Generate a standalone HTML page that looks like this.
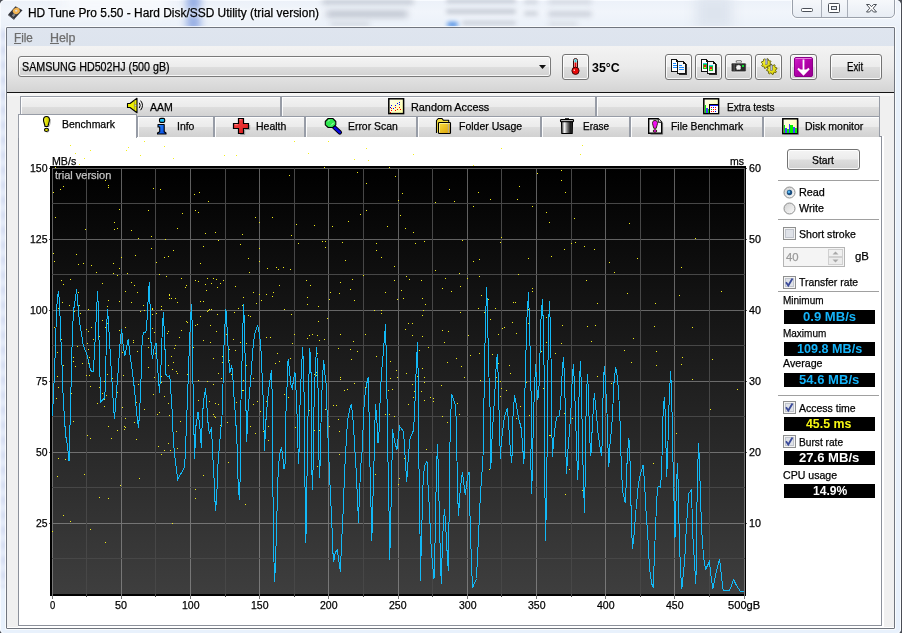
<!DOCTYPE html>
<html><head><meta charset="utf-8"><title>HD Tune Pro 5.50 - Hard Disk/SSD Utility (trial version)</title>
<style>
html,body{margin:0;padding:0}
html{background:#fff}
body{width:902px;height:633px;overflow:hidden;position:relative;background:#4a4d55;font-family:"Liberation Sans",sans-serif;font-size:11px;color:#000}
.abs{position:absolute}
.t{position:absolute;white-space:nowrap;line-height:13px;font-size:11px;transform-origin:0 0;-webkit-text-stroke:0.25px currentColor}
.glass{left:0;top:0;width:901px;height:634px;border-radius:5px;background:linear-gradient(180deg,#ecf1f9 0,#f1f5fb 12px,#ebf1f9 27px,#e8f1fb 60px,#e8f1fc 633px);box-shadow:inset 0 0 0 1px #f8fbff}
.ledge{left:1px;top:28px;width:5px;height:560px;background:repeating-linear-gradient(180deg,#e6ecf8 0,#cfd5ee 7px,#e6ecf8 15px);filter:blur(1.500px);opacity:.8}
.streak{border-radius:3px}
.capbtns{left:792px;top:-1px;height:17px;width:101px;border:1px solid #9aa0aa;border-radius:0 0 5px 5px;background:linear-gradient(180deg,#f6f8fb,#e8edf4);display:flex;overflow:hidden;box-shadow:0 0 0 1px rgba(255,255,255,.7)}
.capbtns div{height:17px;border-right:1px solid #a8aeb8}
.client{left:6px;top:27px;width:887px;height:600px;border:1px solid #70757e;background:#f0f0f0;box-shadow:0 0 0 1px rgba(255,255,255,.75);border-radius:1px}
.menubar{left:7px;top:28px;width:887px;height:18px;background:linear-gradient(180deg,#dfe5ef,#dde4ee)}
.toolbar{left:7px;top:46px;width:887px;height:46px;background:linear-gradient(180deg,#f3f3f3 0,#ebebeb 45%,#d4d4d4 100%)}
.combo{left:18px;top:56px;width:531px;height:19px;border:1px solid #7a7a7a;border-radius:3px;background:linear-gradient(180deg,#f4f4f4 0,#ececec 50%,#dedede 51%,#d2d2d2 100%);box-shadow:inset 0 0 0 1px rgba(255,255,255,.8)}
.btn{border:1px solid #737373;border-radius:3px;background:linear-gradient(180deg,#f4f4f4 0,#ececec 48%,#dddddd 52%,#d0d0d0 100%);box-shadow:inset 0 0 0 1px rgba(255,255,255,.85)}
.tab{border:1px solid #979ca6;border-bottom:0;background:linear-gradient(180deg,#f3f3f3 0,#ebebeb 48%,#dddddd 52%,#d1d1d1 100%);box-shadow:inset 1px 1px 0 rgba(255,255,255,.9)}
.tab.sel{background:#fff;box-shadow:none}
.pane{left:18px;top:136px;width:862px;height:488px;border:1px solid #8c919b;background:#fff}
.spin{left:783px;top:247px;width:60px;height:18px;border:1px solid #b4b4b4;background:#f4f4f4}
.vbox{left:784px;width:91px;height:14px;background:#000}
</style></head>
<body>
<div class="abs glass"></div><div class="abs ledge"></div>
<div class="abs streak" style="left:187px;top:-8px;width:13px;height:40px;background:#8fa8e2;filter:blur(4px)"></div>
<div class="abs streak" style="left:322px;top:0px;width:92px;height:4px;background:#bcc2cd;filter:blur(2.500px)"></div>
<div class="abs streak" style="left:326px;top:11px;width:82px;height:6px;background:#b6bcc8;filter:blur(3px)"></div>
<div class="abs streak" style="left:330px;top:22px;width:40px;height:4px;background:#d0d5de;filter:blur(2.500px)"></div>
<div class="abs streak" style="left:446px;top:-1px;width:70px;height:4px;background:#c2c8d3;filter:blur(2px)"></div>
<div class="abs streak" style="left:446px;top:9px;width:70px;height:5px;background:#c6ccd6;filter:blur(2px)"></div>
<div class="abs streak" style="left:462px;top:21px;width:54px;height:4px;background:#c9ced8;filter:blur(2px)"></div>
<div class="abs streak" style="left:447px;top:22px;width:11px;height:5px;background:#4f8fe6;filter:blur(2px)"></div>
<div class="abs streak" style="left:524px;top:0px;width:14px;height:4px;background:#cfd4dd;filter:blur(2px)"></div>
<div class="abs streak" style="left:524px;top:11px;width:14px;height:5px;background:#cfd4dd;filter:blur(2px)"></div>
<div class="abs streak" style="left:548px;top:0px;width:44px;height:4px;background:#cdd2dc;filter:blur(2.500px)"></div>
<div class="abs streak" style="left:548px;top:11px;width:44px;height:6px;background:#cdd2dc;filter:blur(2.500px)"></div>
<div class="abs streak" style="left:548px;top:22px;width:30px;height:4px;background:#d4d9e1;filter:blur(2.500px)"></div>
<div class="abs streak" style="left:696px;top:-4px;width:36px;height:34px;background:#dde4ee;filter:blur(6px)"></div>
<div class="abs streak" style="left:60px;top:-10px;width:110px;height:22px;background:#f8fafd;filter:blur(8px)"></div>
<svg class="abs" style="left:7px;top:5px" width="17" height="16" viewBox="0 0 17 16"><polygon points="1.200,9.500 8.500,1.200 15.500,5.200 7.200,14.200" fill="#33353c"/><polygon points="1.200,9.500 7.200,14.200 7.200,15 1.200,10.300" fill="#1c1c20"/><ellipse cx="9.300" cy="5.900" rx="3.600" ry="3.100" fill="#f3b450" transform="rotate(-28 9.300 5.900)"/><ellipse cx="9.200" cy="5.800" rx="1.200" ry="1" fill="#dcdcdc"/><rect x="5.200" y="9.200" width="3" height="2.200" fill="#8a8a8a" transform="rotate(-45 6.500 10.300)"/></svg>
<div class="t" style="left:28.0px;transform:scaleX(0.994);top:6px;font-size:12px;line-height:14px;text-shadow:0 0 4px rgba(255,255,255,.9),0 0 8px rgba(255,255,255,.7);">HD Tune Pro 5.50 - Hard Disk/SSD Utility (trial version)</div>
<div class="abs capbtns"><div style="width:28px"></div><div style="width:26px"></div><div style="width:46px;border-right:0"></div></div>
<svg class="abs" style="left:792px;top:0" width="104" height="19" viewBox="0 0 104 19">
<rect x="9.500" y="8.500" width="11" height="3" rx="1" fill="#fff" stroke="#4b5058"/>
<rect x="36.500" y="3.500" width="11" height="9" rx="1" fill="#fff" stroke="#4b5058"/><rect x="39.500" y="6.500" width="5" height="3" fill="#dfe4ea" stroke="#4b5058"/>
<path d="M74.500 4.500h3l2 2.200 2-2.200h3l-3.300 3.700 3.300 3.800h-3l-2-2.300-2 2.300h-3l3.300-3.800z" fill="#fff" stroke="#4b5058" stroke-linejoin="round"/>
</svg>
<div class="abs client"></div>
<div class="abs menubar"></div>
<div class="t" style="left:13.9px;transform:scaleX(0.975);top:31px;font-size:12px;line-height:14px;color:#6d6d6d;"><u>F</u>ile</div>
<div class="t" style="left:49.7px;transform:scaleX(1.034);top:31px;font-size:12px;line-height:14px;color:#6d6d6d;"><u>H</u>elp</div>
<div class="abs toolbar"></div>
<div class="abs" style="left:7px;top:92px;width:887px;height:1px;background:#141414"></div>
<div class="abs" style="left:7px;top:93px;width:887px;height:3px;background:#f6f6f6"></div>
<div class="abs combo"></div>
<div class="t" style="left:21.7px;transform:scaleX(0.893);top:60px;font-size:12px;line-height:14px;">SAMSUNG HD502HJ (500 gB)</div>
<svg class="abs" style="left:538px;top:64px" width="9" height="6"><polygon points="1,1 8,1 4.500,5" fill="#111"/></svg>
<div class="abs btn" style="left:562px;top:54px;width:25px;height:24px"></div>
<div class="t" style="left:591.9px;transform:scaleX(1.034);top:61px;font-size:12px;line-height:14px;font-weight:bold;-webkit-text-stroke:0;">35°C</div>
<div class="abs btn" style="left:665px;top:54px;width:25px;height:24px"></div>
<div class="abs btn" style="left:695px;top:54px;width:25px;height:24px"></div>
<div class="abs btn" style="left:725px;top:54px;width:25px;height:24px"></div>
<div class="abs btn" style="left:755px;top:54px;width:25px;height:24px"></div>
<div class="abs btn" style="left:790px;top:54px;width:25px;height:24px"></div>
<div class="abs btn" style="left:830px;top:54px;width:50px;height:24px"></div>
<div class="t" style="left:847.1px;transform:scaleX(0.803);top:60px;font-size:12px;line-height:14px;">Exit</div>
<svg class="abs" style="left:0;top:46px" width="902" height="46" viewBox="0 46 902 46"><defs><linearGradient id="pur" x1="0" y1="0" x2="1" y2="1"><stop offset="0" stop-color="#d020c8"/><stop offset="0.5" stop-color="#b000a8"/><stop offset="1" stop-color="#98008f"/></linearGradient><linearGradient id="gy" x1="0" y1="0" x2="1" y2="1"><stop offset="0" stop-color="#fafa40"/><stop offset="1" stop-color="#d8cc00"/></linearGradient></defs><rect x="573.500" y="58.500" width="4" height="12" rx="2" fill="#f0fbfc" stroke="#3a0a0a" stroke-width="1"/><rect x="574.500" y="59.500" width="2" height="3" fill="#30c8d8"/><rect x="574.500" y="62.500" width="2" height="7" fill="#e80808"/><circle cx="575.500" cy="70.800" r="3.600" fill="#e80808" stroke="#3a0a0a" stroke-width="1"/><rect x="573.600" y="69.500" width="1.400" height="1.400" fill="#ffd0d0"/><g shape-rendering="crispEdges"><path d="M671.5 59.500h5l2 2v10h-7z" fill="#fff" stroke="#111" stroke-linejoin="miter"/><path d="M676.5 59.500v2h2" fill="none" stroke="#111"/><path d="M678.5 63.500h7v11h-7" fill="none" stroke="#3a3a3a" /><path d="M677.5 61.500h6l2 2v10h-8z" fill="#f6f6f6" stroke="#111"/><path d="M683.5 61.500v2h2" fill="none" stroke="#111"/><path d="M686.5 64v10.500h-8" fill="none" stroke="#2a2a2a"/><rect x="673" y="63" width="3" height="1" fill="#1e8cff"/><rect x="673" y="65" width="4" height="1" fill="#1e8cff"/><rect x="673" y="67" width="4" height="1" fill="#1e8cff"/><rect x="679" y="65" width="3" height="1" fill="#1e8cff"/><rect x="679" y="67" width="5" height="1" fill="#1e8cff"/><rect x="679" y="69" width="5" height="1" fill="#1e8cff"/><path d="M701.5 59.500h5l2 2v10h-7z" fill="#fff" stroke="#111" stroke-linejoin="miter"/><path d="M706.5 59.500v2h2" fill="none" stroke="#111"/><path d="M708.5 63.500h7v11h-7" fill="none" stroke="#3a3a3a" /><path d="M707.5 61.500h6l2 2v10h-8z" fill="#f6f6f6" stroke="#111"/><path d="M713.5 61.500v2h2" fill="none" stroke="#111"/><path d="M716.5 64v10.500h-8" fill="none" stroke="#2a2a2a"/><rect x="703" y="63" width="4" height="1" fill="#20c8e8"/><rect x="703" y="64" width="4" height="5" fill="#20c030"/><rect x="704" y="65" width="2" height="2" fill="#e81818"/><rect x="704" y="67" width="2" height="1" fill="#e8e020"/><rect x="709" y="65" width="4" height="1" fill="#20c8e8"/><rect x="709" y="66" width="4" height="5" fill="#20c030"/><rect x="710" y="67" width="2" height="2" fill="#e81818"/><rect x="710" y="69" width="2" height="1" fill="#e8e020"/></g><path d="M735.500 63v-1.500q0-1.500 1.500-1.500h3.500q1.500 0 1.500 1.500v1.500z" fill="#3a3a3a" stroke="#fff" stroke-width="0.600"/><rect x="736.500" y="60.800" width="4.500" height="1.700" rx="0.800" fill="#d8d8d8"/><rect x="731.200" y="63" width="15" height="8.800" rx="1.200" fill="#2c2c2c" stroke="#fff" stroke-width="0.600"/><rect x="733.700" y="63.500" width="0.800" height="8" fill="#6a6a6a"/><circle cx="738.500" cy="67.400" r="2.600" fill="#f4f4f4" stroke="#111" stroke-width="0.800" stroke-dasharray="1 0.700"/><rect x="742" y="65" width="2" height="2" fill="#10e030" shape-rendering="crispEdges"/><polygon points="771.20,64.59 770.91,65.53 769.45,65.72 768.98,66.30 769.06,67.77 768.20,68.23 767.03,67.33 766.29,67.40 765.31,68.50 764.37,68.21 764.18,66.75 763.60,66.28 762.13,66.36 761.67,65.50 762.57,64.33 762.50,63.59 761.40,62.61 761.69,61.67 763.15,61.48 763.62,60.90 763.54,59.43 764.40,58.97 765.57,59.87 766.31,59.80 767.29,58.70 768.23,58.99 768.42,60.45 769.00,60.92 770.47,60.84 770.93,61.70 770.03,62.87 770.10,63.61" fill="url(#gy)" stroke="#5a5600" stroke-width="0.900" stroke-linejoin="round"/><polygon points="776.36,71.79 775.79,72.64 774.25,72.34 773.61,72.76 773.26,74.29 772.26,74.48 771.38,73.18 770.63,73.02 769.31,73.86 768.46,73.29 768.76,71.75 768.34,71.11 766.81,70.76 766.62,69.76 767.92,68.88 768.08,68.13 767.24,66.81 767.81,65.96 769.35,66.26 769.99,65.84 770.34,64.31 771.34,64.12 772.22,65.42 772.97,65.58 774.29,64.74 775.14,65.31 774.84,66.85 775.26,67.49 776.79,67.84 776.98,68.84 775.68,69.72 775.52,70.47" fill="url(#gy)" stroke="#5a5600" stroke-width="0.900" stroke-linejoin="round"/><rect x="765.500" y="59" width="1.800" height="5.500" fill="#8890b8" stroke="#4a5070" stroke-width="0.400"/><rect x="765.700" y="59.300" width="0.600" height="4.800" fill="#e8ecff"/><rect x="770.700" y="65" width="1.800" height="5.500" fill="#8890b8" stroke="#4a5070" stroke-width="0.400"/><rect x="770.900" y="65.300" width="0.600" height="4.800" fill="#e8ecff"/><rect x="794.500" y="57.500" width="18" height="19" rx="1.500" fill="url(#pur)" stroke="#8a0088" stroke-width="1"/><path d="M795.500 58.500h16" stroke="#e878e0" stroke-width="1"/><path d="M803.500 59.500v13.500" stroke="#fff" stroke-width="1.800" fill="none"/><path d="M798 68.500l5.500 5.800 5.500-5.800" stroke="#fff" stroke-width="2" fill="none" stroke-linejoin="miter"/><polygon points="799.500,69.500 807.500,69.500 803.500,73.800" fill="#fff"/></svg>
<div class="abs tab" style="left:20px;top:96px;width:259px;height:20px"></div>
<div class="t" style="left:149.7px;transform:scaleX(0.958);top:101px;font-size:11px;line-height:12px;">AAM</div>
<div class="abs tab" style="left:281px;top:96px;width:313px;height:20px"></div>
<div class="t" style="left:410.7px;transform:scaleX(0.985);top:101px;font-size:11px;line-height:12px;">Random Access</div>
<div class="abs tab" style="left:596px;top:96px;width:282px;height:20px"></div>
<div class="t" style="left:726.7px;transform:scaleX(0.916);top:101px;font-size:11px;line-height:12px;">Extra tests</div>
<div class="abs" style="left:18px;top:136px;width:866px;height:492px;background:#fff"></div>
<div class="abs" style="left:7px;top:627px;width:887px;height:1px;background:#fff"></div>
<div class="abs pane"></div>
<div class="abs tab" style="left:137px;top:116px;width:75px;height:20px"></div>
<div class="t" style="left:177.1px;transform:scaleX(0.950);top:120px;font-size:11px;line-height:12px;">Info</div>
<div class="abs tab" style="left:214px;top:116px;width:89px;height:20px"></div>
<div class="t" style="left:256.1px;transform:scaleX(0.954);top:120px;font-size:11px;line-height:12px;">Health</div>
<div class="abs tab" style="left:305px;top:116px;width:110px;height:20px"></div>
<div class="t" style="left:347.7px;transform:scaleX(0.946);top:120px;font-size:11px;line-height:12px;">Error Scan</div>
<div class="abs tab" style="left:417px;top:116px;width:122px;height:20px"></div>
<div class="t" style="left:458.9px;transform:scaleX(0.955);top:120px;font-size:11px;line-height:12px;">Folder Usage</div>
<div class="abs tab" style="left:541px;top:116px;width:87px;height:20px"></div>
<div class="t" style="left:583.4px;transform:scaleX(0.908);top:120px;font-size:11px;line-height:12px;">Erase</div>
<div class="abs tab" style="left:630px;top:116px;width:131px;height:20px"></div>
<div class="t" style="left:671.3px;transform:scaleX(0.944);top:120px;font-size:11px;line-height:12px;">File Benchmark</div>
<div class="abs tab" style="left:763px;top:116px;width:115px;height:20px"></div>
<div class="t" style="left:805.1px;transform:scaleX(0.955);top:120px;font-size:11px;line-height:12px;">Disk monitor</div>
<div class="abs tab sel" style="left:18px;top:114px;width:117px;height:23px"></div>
<div class="t" style="left:61.9px;transform:scaleX(0.950);top:118px;font-size:11px;line-height:12px;">Benchmark</div>
<svg class="abs" style="left:0;top:94px" width="902" height="44" viewBox="0 94 902 44"><defs><linearGradient id="py" x1="0" y1="0" x2="1" y2="1"><stop offset="0" stop-color="#fffff0"/><stop offset="1" stop-color="#ffffa0"/></linearGradient><linearGradient id="fold" x1="0" y1="0" x2="1" y2="1"><stop offset="0" stop-color="#f8e040"/><stop offset="1" stop-color="#dca008"/></linearGradient><linearGradient id="can" x1="0" y1="0" x2="1" y2="0"><stop offset="0" stop-color="#4a4a4a"/><stop offset="0.28" stop-color="#f4f4f4"/><stop offset="0.5" stop-color="#8a8a8a"/><stop offset="0.8" stop-color="#1a1a1a"/><stop offset="1" stop-color="#3a3a3a"/></linearGradient><linearGradient id="redg" x1="0" y1="0" x2="1" y2="1"><stop offset="0" stop-color="#f84848"/><stop offset="1" stop-color="#d81818"/></linearGradient><linearGradient id="blug" x1="0" y1="0" x2="1" y2="1"><stop offset="0" stop-color="#3090ff"/><stop offset="1" stop-color="#0040e0"/></linearGradient><linearGradient id="yel" x1="0" y1="0" x2="1" y2="0"><stop offset="0" stop-color="#f4f450"/><stop offset="0.5" stop-color="#e0e000"/><stop offset="1" stop-color="#c8c800"/></linearGradient></defs><path d="M127.500 103.500h2.500l7-5.200v14.400l-7-5.200h-2.500z" fill="#f0f000" stroke="#000" stroke-width="1.100" stroke-linejoin="round"/><path d="M134.400 100.500v9.500" stroke="#9a9a40" stroke-width="0.800"/><circle cx="135.300" cy="105.400" r="0.900" fill="#e8e8e8" stroke="#555" stroke-width="0.400"/><path d="M139.300 102.800q1.800 2.600 0 5.200M140.600 100.600q3.800 4.800 0 9.600" fill="none" stroke="#000" stroke-width="1"/><rect x="388.800" y="98.800" width="14.800" height="14.800" fill="url(#py)" stroke="#000" stroke-width="1.500"/><g shape-rendering="crispEdges"><rect x="391" y="105" width="1" height="1" fill="#0000ff"/><rect x="390" y="107" width="1" height="1" fill="#0000ff"/><rect x="393" y="108" width="1" height="1" fill="#0000ff"/><rect x="395" y="105" width="1" height="1" fill="#0000ff"/><rect x="397" y="103" width="1" height="1" fill="#0000ff"/><rect x="399" y="102" width="1" height="1" fill="#0000ff"/><rect x="399" y="104" width="1" height="1" fill="#0000ff"/><rect x="391" y="108" width="1" height="1" fill="#ff0000"/><rect x="391" y="110" width="1" height="1" fill="#ff0000"/><rect x="390" y="112" width="1" height="1" fill="#ff0000"/><rect x="395" y="107" width="1" height="1" fill="#ff0000"/><rect x="395" y="110" width="1" height="1" fill="#ff0000"/><rect x="397" y="109" width="1" height="1" fill="#ff0000"/><rect x="399" y="107" width="1" height="1" fill="#ff0000"/><rect x="400" y="109" width="1" height="1" fill="#ff0000"/></g><rect x="703.800" y="98.800" width="14.800" height="14.800" fill="url(#py)" stroke="#000" stroke-width="1.500"/><g shape-rendering="crispEdges"><rect x="704.5" y="105" width="1.5" height="8.2" fill="#00f000"/><rect x="706" y="108" width="2" height="5.2" fill="#4040ff"/><rect x="708" y="109" width="1" height="4.2" fill="#00f000"/><rect x="709.500" y="104.500" width="9" height="9" fill="#fff" stroke="#000"/><rect x="710" y="105" width="8" height="1" fill="#2020ff"/><rect x="711" y="107" width="1" height="1" fill="#ff0000"/><rect x="713" y="107" width="1" height="1" fill="#0000ff"/><rect x="715" y="107" width="1" height="1" fill="#ff0000"/><rect x="711" y="109" width="1" height="1" fill="#00b000"/><rect x="713" y="109" width="1" height="1" fill="#ff0000"/><rect x="715" y="109" width="1" height="1" fill="#ff0000"/><rect x="711" y="111" width="1" height="1" fill="#ff0000"/><rect x="713" y="111" width="1" height="1" fill="#ff0000"/><rect x="715" y="111" width="1" height="1" fill="#0000ff"/></g><path d="M46.500 116.500c-2.300 0-3 1.500-3 3.500 0 2.400 1.300 3.800 1.500 6.500h3c0.200-2.700 1.500-4.100 1.500-6.500 0-2-0.700-3.500-3-3.500z" fill="url(#yel)" stroke="#000" stroke-width="1.100"/><ellipse cx="46.500" cy="129.900" rx="2" ry="1.600" fill="#e0e000" stroke="#000" stroke-width="1.100"/><path d="M50.300 119v2.500q0 2-1.300 5M49.200 130.500q-0.500 1.800-2.500 1.800" stroke="#9a9a9a" stroke-width="0.800" fill="none"/><rect x="159.500" y="118.400" width="5.200" height="4" rx="1.300" fill="#20c0f8" stroke="#000" stroke-width="1.100"/><path d="M158 124.500h6.200v7.200l1.800 1.300v1h-8.500v-1l2.200-1.300v-4.700h-1.700z" fill="url(#blug)" stroke="#000" stroke-width="1.100" stroke-linejoin="round"/><path d="M238.500 118.500h5v5h5v5h-5v5h-5v-5h-5v-5h5z" fill="url(#redg)" stroke="#000" stroke-width="1.200" stroke-linejoin="miter"/><path d="M239.500 119.700h2M234.700 124.700h3" stroke="#ffa0a0" stroke-width="0.800"/><path d="M249.700 125v4.500h-5v5h-4.500" stroke="#8a8a8a" stroke-width="0.800" fill="none"/><path d="M334 127l5.800 5.400" stroke="#000" stroke-width="4.400" stroke-linecap="round"/><path d="M334 127l5.800 5.400" stroke="#0808e0" stroke-width="2.600" stroke-linecap="round"/><polygon points="328.200,118.500 332.800,118.500 335.800,121.500 335.800,124.800 332.800,127.500 328.200,127.500 325.300,124.800 325.300,121.500" fill="#30e850" stroke="#000" stroke-width="1.100" stroke-linejoin="round"/><path d="M328 121.500l1.500-1.500M331 125.500l2.800-2.800" stroke="#d8ffd8" stroke-width="0.900"/><path d="M436.500 133v-12.500l1.800-2h3.700l1.500 1.800h5.200v2" fill="#f4e040" stroke="#000" stroke-width="1.100" stroke-linejoin="round"/><rect x="438.500" y="122.500" width="12" height="11" rx="0.800" fill="url(#fold)" stroke="#000" stroke-width="1.100"/><path d="M439.500 132.500v-9h10" stroke="#fff8b0" stroke-width="0.800" fill="none"/><path d="M448.300 123.500v9.500" stroke="#b0b0b0" stroke-width="0.900"/><rect x="565" y="118.200" width="4" height="1.500" fill="#000"/><rect x="560.500" y="119.500" width="13" height="2.200" rx="0.800" fill="#b8b8b8" stroke="#000" stroke-width="1.100"/><path d="M561.500 121.700h11l-0.300 11.800h-10.400z" fill="url(#can)" stroke="#000" stroke-width="1.100" stroke-linejoin="round"/><path d="M648.700 118.700h9.500l3.500 3.500v11.100h-13z" fill="#f4f4f4" stroke="#000" stroke-width="1.400" stroke-linejoin="miter"/><path d="M658.200 118.700v3.500h3.500" fill="#fff" stroke="#000" stroke-width="1"/><path d="M662.600 123v11.200h-12" stroke="#555" stroke-width="0.800" fill="none"/><path d="M655 120.500c-1.900 0-2.500 1.200-2.500 2.800 0 1.900 1.100 3 1.300 5h2.400c0.200-2 1.300-3.100 1.300-5 0-1.600-0.600-2.800-2.500-2.800z" fill="#f010f0" stroke="#202000" stroke-width="0.900"/><ellipse cx="655" cy="131" rx="1.800" ry="1.300" fill="#f010f0" stroke="#202000" stroke-width="0.900"/><rect x="782.800" y="118.800" width="14.800" height="14.800" fill="url(#py)" stroke="#000" stroke-width="1.500"/><g shape-rendering="crispEdges"><rect x="783.5" y="125" width="1.5" height="8" fill="#00f000"/><rect x="785" y="128" width="2" height="5" fill="#4040ff"/><rect x="787" y="129" width="2" height="4" fill="#00f000"/><rect x="789" y="124" width="1" height="9" fill="#4040ff"/><rect x="790" y="125" width="3" height="8" fill="#00f000"/><rect x="793" y="127" width="2" height="6" fill="#4040ff"/><rect x="795" y="128" width="2" height="5" fill="#00f000"/></g><path d="M798.300 120.500v14h-14" stroke="#777" stroke-width="0.800" fill="none"/></svg>
<svg class="abs" style="left:0;top:140px" width="882" height="485" viewBox="0 140 882 485">
<defs><linearGradient id="pg" x1="0" y1="0" x2="0" y2="1"><stop offset="0" stop-color="#000"/><stop offset="1" stop-color="#3e3e3e"/></linearGradient><linearGradient id="gg" gradientUnits="userSpaceOnUse" x1="0" y1="168" x2="0" y2="594"><stop offset="0" stop-color="#5e5e5e"/><stop offset="1" stop-color="#787878"/></linearGradient></defs>
<rect x="50" y="166" width="696" height="430" fill="#000"/>
<rect x="52" y="168" width="693" height="426" fill="url(#pg)"/>
<path d="M52.5 168V599M121.5 168V599M190.5 168V599M259.5 168V599M328.5 168V599M398.5 168V599M467.5 168V599M536.5 168V599M605.5 168V599M674.5 168V599M744.5 168V599M52 168.5H745M52 239.5H745M52 310.5H745M52 381.5H745M52 452.5H745M52 523.5H745" stroke="url(#gg)" stroke-width="1" fill="none" shape-rendering="crispEdges"/>
<path d="M86.5 168V597M155.5 168V597M225.5 168V597M294.5 168V597M363.5 168V597M432.5 168V597M501.5 168V597M571.5 168V597M640.5 168V597M709.5 168V597M52 203.5H745M52 274.5H745M52 345.5H745M52 416.5H745M52 487.5H745M52 558.5H745" stroke="#474747" stroke-width="1" fill="none" shape-rendering="crispEdges"/>
<path d="M49 168.5H50M746 168.5H747M49 239.5H50M746 239.5H747M49 310.5H50M746 310.5H747M49 381.5H50M746 381.5H747M49 452.5H50M746 452.5H747M49 523.5H50M746 523.5H747" stroke="#555" stroke-width="1" fill="none" shape-rendering="crispEdges"/>
<path d="M70 145h1v1h-1zM90 150h1v1h-1zM75 153h1v1h-1zM84 158h1v1h-1zM79 164h1v1h-1zM126 150h1v1h-1zM128 147h1v1h-1zM144 141h1v1h-1zM140 155h1v1h-1zM164 146h1v1h-1zM173 158h1v1h-1zM224 155h1v1h-1zM236 155h1v1h-1zM294 141h1v1h-1zM308 153h1v1h-1zM328 141h1v1h-1zM354 159h1v1h-1zM366 148h1v1h-1zM368 160h1v1h-1zM55 167h1v1h-1zM63 186h1v1h-1zM60 189h1v1h-1zM53 192h1v1h-1zM105 180h1v1h-1zM108 185h1v1h-1zM108 187h1v1h-1zM153 188h1v1h-1zM160 189h1v1h-1zM194 194h1v1h-1zM199 192h1v1h-1zM208 201h1v1h-1zM289 175h1v1h-1zM324 167h1v1h-1zM357 172h1v1h-1zM366 183h1v1h-1zM389 167h1v1h-1zM395 176h1v1h-1zM398 200h1v1h-1zM55 217h1v1h-1zM85 229h1v1h-1zM119 209h1v1h-1zM114 222h1v1h-1zM114 229h1v1h-1zM117 228h1v1h-1zM131 230h1v1h-1zM148 210h1v1h-1zM138 238h1v1h-1zM151 236h1v1h-1zM182 213h1v1h-1zM177 228h1v1h-1zM165 239h1v1h-1zM195 210h1v1h-1zM198 212h1v1h-1zM205 233h1v1h-1zM215 232h1v1h-1zM218 240h1v1h-1zM242 234h1v1h-1zM255 217h1v1h-1zM259 222h1v1h-1zM272 217h1v1h-1zM291 235h1v1h-1zM296 224h1v1h-1zM314 225h1v1h-1zM332 226h1v1h-1zM348 221h1v1h-1zM360 214h1v1h-1zM366 210h1v1h-1zM387 226h1v1h-1zM53 253h1v1h-1zM54 261h1v1h-1zM76 254h1v1h-1zM78 264h1v1h-1zM83 263h1v1h-1zM91 265h1v1h-1zM96 272h1v1h-1zM113 263h1v1h-1zM119 268h1v1h-1zM121 257h1v1h-1zM113 273h1v1h-1zM117 275h1v1h-1zM127 273h1v1h-1zM135 255h1v1h-1zM151 248h1v1h-1zM156 262h1v1h-1zM164 257h1v1h-1zM168 256h1v1h-1zM173 250h1v1h-1zM159 274h1v1h-1zM166 276h1v1h-1zM203 246h1v1h-1zM200 263h1v1h-1zM240 244h1v1h-1zM248 258h1v1h-1zM249 272h1v1h-1zM259 248h1v1h-1zM259 261h1v1h-1zM267 268h1v1h-1zM276 267h1v1h-1zM278 269h1v1h-1zM283 267h1v1h-1zM290 269h1v1h-1zM298 243h1v1h-1zM322 241h1v1h-1zM325 241h1v1h-1zM325 247h1v1h-1zM342 242h1v1h-1zM345 260h1v1h-1zM376 243h1v1h-1zM376 250h1v1h-1zM381 257h1v1h-1zM394 266h1v1h-1zM363 275h1v1h-1zM413 154h1v1h-1zM501 148h1v1h-1zM582 145h1v1h-1zM580 154h1v1h-1zM473 165h1v1h-1zM402 193h1v1h-1zM449 189h1v1h-1zM435 202h1v1h-1zM454 201h1v1h-1zM478 192h1v1h-1zM490 199h1v1h-1zM519 186h1v1h-1zM517 199h1v1h-1zM537 173h1v1h-1zM561 170h1v1h-1zM561 180h1v1h-1zM565 192h1v1h-1zM473 206h1v1h-1zM532 206h1v1h-1zM546 212h1v1h-1zM549 222h1v1h-1zM574 218h1v1h-1zM629 223h1v1h-1zM400 215h1v1h-1zM405 228h1v1h-1zM413 232h1v1h-1zM415 243h1v1h-1zM424 241h1v1h-1zM462 240h1v1h-1zM501 237h1v1h-1zM500 242h1v1h-1zM571 243h1v1h-1zM575 242h1v1h-1zM584 246h1v1h-1zM594 249h1v1h-1zM564 249h1v1h-1zM551 256h1v1h-1zM528 258h1v1h-1zM479 259h1v1h-1zM473 261h1v1h-1zM609 262h1v1h-1zM637 258h1v1h-1zM614 272h1v1h-1zM681 267h1v1h-1zM695 238h1v1h-1zM435 270h1v1h-1zM459 273h1v1h-1zM479 276h1v1h-1zM518 274h1v1h-1zM406 276h1v1h-1zM532 288h1v1h-1zM532 291h1v1h-1zM528 309h1v1h-1zM528 323h1v1h-1zM546 317h1v1h-1zM562 325h1v1h-1zM546 342h1v1h-1zM561 343h1v1h-1zM525 354h1v1h-1zM541 351h1v1h-1zM548 353h1v1h-1zM555 353h1v1h-1zM586 280h1v1h-1zM597 303h1v1h-1zM587 326h1v1h-1zM595 325h1v1h-1zM591 341h1v1h-1zM614 272h1v1h-1zM627 293h1v1h-1zM633 338h1v1h-1zM624 350h1v1h-1zM631 362h1v1h-1zM597 376h1v1h-1zM611 383h1v1h-1zM613 398h1v1h-1zM562 375h1v1h-1zM573 373h1v1h-1zM526 382h1v1h-1zM543 388h1v1h-1zM529 415h1v1h-1zM564 413h1v1h-1zM572 418h1v1h-1zM655 303h1v1h-1zM654 326h1v1h-1zM656 351h1v1h-1zM656 365h1v1h-1zM679 295h1v1h-1zM692 327h1v1h-1zM682 357h1v1h-1zM681 364h1v1h-1zM692 379h1v1h-1zM721 291h1v1h-1zM712 359h1v1h-1zM737 389h1v1h-1zM710 409h1v1h-1zM676 433h1v1h-1zM549 435h1v1h-1zM550 435h1v1h-1zM569 469h1v1h-1zM565 494h1v1h-1zM582 490h1v1h-1zM653 463h1v1h-1zM87 435h1v1h-1zM90 438h1v1h-1zM111 438h1v1h-1zM117 430h1v1h-1zM136 439h1v1h-1zM58 458h1v1h-1zM65 459h1v1h-1zM57 476h1v1h-1zM84 474h1v1h-1zM139 478h1v1h-1zM120 485h1v1h-1zM99 497h1v1h-1zM108 498h1v1h-1zM63 515h1v1h-1zM70 521h1v1h-1zM52 531h1v1h-1zM90 529h1v1h-1zM105 542h1v1h-1zM158 446h1v1h-1zM164 450h1v1h-1zM168 443h1v1h-1zM170 450h1v1h-1zM161 454h1v1h-1zM177 448h1v1h-1zM176 431h1v1h-1zM172 523h1v1h-1zM195 489h1v1h-1zM195 498h1v1h-1zM203 475h1v1h-1zM228 462h1v1h-1zM245 504h1v1h-1zM255 433h1v1h-1zM263 431h1v1h-1zM268 440h1v1h-1zM193 430h1v1h-1zM314 430h1v1h-1zM339 431h1v1h-1zM339 454h1v1h-1zM320 458h1v1h-1zM317 466h1v1h-1zM375 474h1v1h-1zM399 478h1v1h-1zM398 484h1v1h-1zM404 458h1v1h-1zM398 433h1v1h-1zM426 449h1v1h-1zM489 469h1v1h-1zM499 445h1v1h-1zM169 295h1v1h-1zM273 292h1v1h-1zM169 294h1v1h-1zM272 296h1v1h-1zM102 283h1v1h-1zM259 294h1v1h-1zM175 298h1v1h-1zM211 283h1v1h-1zM78 292h1v1h-1zM131 282h1v1h-1zM77 295h1v1h-1zM261 300h1v1h-1zM216 279h1v1h-1zM206 290h1v1h-1zM169 298h1v1h-1zM243 297h1v1h-1zM220 283h1v1h-1zM213 278h1v1h-1zM266 294h1v1h-1zM70 279h1v1h-1zM63 284h1v1h-1zM279 285h1v1h-1zM207 278h1v1h-1zM253 292h1v1h-1zM137 292h1v1h-1zM205 284h1v1h-1zM186 285h1v1h-1zM217 287h1v1h-1zM181 278h1v1h-1zM223 280h1v1h-1zM171 298h1v1h-1zM125 291h1v1h-1zM195 280h1v1h-1zM235 286h1v1h-1zM134 285h1v1h-1zM185 287h1v1h-1zM61 280h1v1h-1zM198 281h1v1h-1zM156 313h1v1h-1zM270 337h1v1h-1zM152 308h1v1h-1zM58 387h1v1h-1zM54 327h1v1h-1zM107 306h1v1h-1zM174 348h1v1h-1zM235 350h1v1h-1zM161 309h1v1h-1zM198 380h1v1h-1zM104 399h1v1h-1zM226 334h1v1h-1zM140 311h1v1h-1zM133 342h1v1h-1zM57 352h1v1h-1zM248 315h1v1h-1zM88 331h1v1h-1zM234 312h1v1h-1zM56 307h1v1h-1zM173 362h1v1h-1zM99 387h1v1h-1zM197 324h1v1h-1zM168 365h1v1h-1zM102 393h1v1h-1zM250 316h1v1h-1zM161 382h1v1h-1zM152 314h1v1h-1zM155 353h1v1h-1zM108 300h1v1h-1zM123 375h1v1h-1zM131 302h1v1h-1zM107 323h1v1h-1zM154 377h1v1h-1zM218 373h1v1h-1zM79 305h1v1h-1zM91 327h1v1h-1zM167 333h1v1h-1zM56 398h1v1h-1zM210 342h1v1h-1zM266 337h1v1h-1zM152 309h1v1h-1zM73 311h1v1h-1zM107 374h1v1h-1zM216 331h1v1h-1zM57 376h1v1h-1zM148 347h1v1h-1zM213 358h1v1h-1zM86 375h1v1h-1zM177 373h1v1h-1zM88 349h1v1h-1zM100 380h1v1h-1zM93 339h1v1h-1zM112 378h1v1h-1zM117 392h1v1h-1zM102 320h1v1h-1zM243 380h1v1h-1zM195 325h1v1h-1zM229 349h1v1h-1zM279 361h1v1h-1zM208 310h1v1h-1zM161 306h1v1h-1zM80 313h1v1h-1zM63 365h1v1h-1zM119 330h1v1h-1zM243 390h1v1h-1zM154 332h1v1h-1zM161 376h1v1h-1zM179 337h1v1h-1zM187 322h1v1h-1zM238 308h1v1h-1zM86 329h1v1h-1zM176 371h1v1h-1zM221 378h1v1h-1zM211 309h1v1h-1zM125 327h1v1h-1zM106 395h1v1h-1zM58 308h1v1h-1zM122 352h1v1h-1zM168 331h1v1h-1zM69 305h1v1h-1zM99 336h1v1h-1zM148 367h1v1h-1zM200 316h1v1h-1zM77 346h1v1h-1zM89 357h1v1h-1zM138 384h1v1h-1zM241 388h1v1h-1zM187 374h1v1h-1zM89 375h1v1h-1zM62 302h1v1h-1zM175 345h1v1h-1zM233 339h1v1h-1zM62 302h1v1h-1zM207 381h1v1h-1zM73 361h1v1h-1zM71 393h1v1h-1zM133 340h1v1h-1zM88 309h1v1h-1zM73 357h1v1h-1zM193 347h1v1h-1zM242 305h1v1h-1zM284 394h1v1h-1zM242 390h1v1h-1zM87 343h1v1h-1zM144 310h1v1h-1zM229 360h1v1h-1zM284 309h1v1h-1zM277 353h1v1h-1zM256 303h1v1h-1zM275 363h1v1h-1zM200 301h1v1h-1zM213 384h1v1h-1zM151 348h1v1h-1zM203 301h1v1h-1zM209 309h1v1h-1zM74 311h1v1h-1zM217 314h1v1h-1zM119 353h1v1h-1zM240 342h1v1h-1zM153 394h1v1h-1zM231 374h1v1h-1zM171 356h1v1h-1zM172 369h1v1h-1zM75 366h1v1h-1zM246 365h1v1h-1zM61 339h1v1h-1zM207 311h1v1h-1zM177 302h1v1h-1zM112 389h1v1h-1zM82 363h1v1h-1zM253 378h1v1h-1zM222 362h1v1h-1zM119 301h1v1h-1zM148 338h1v1h-1zM90 386h1v1h-1zM210 325h1v1h-1zM186 321h1v1h-1zM246 343h1v1h-1zM222 356h1v1h-1zM181 330h1v1h-1zM137 351h1v1h-1zM224 332h1v1h-1zM104 381h1v1h-1zM164 396h1v1h-1zM105 327h1v1h-1zM152 328h1v1h-1zM203 340h1v1h-1zM107 317h1v1h-1zM88 363h1v1h-1zM143 305h1v1h-1zM236 402h1v1h-1zM124 426h1v1h-1zM97 403h1v1h-1zM169 415h1v1h-1zM124 429h1v1h-1zM108 426h1v1h-1zM159 412h1v1h-1zM214 416h1v1h-1zM180 421h1v1h-1zM134 422h1v1h-1zM268 426h1v1h-1zM213 414h1v1h-1zM136 402h1v1h-1zM266 401h1v1h-1zM125 427h1v1h-1zM209 401h1v1h-1zM227 422h1v1h-1zM125 418h1v1h-1zM144 409h1v1h-1zM220 425h1v1h-1zM198 400h1v1h-1zM218 404h1v1h-1zM157 414h1v1h-1zM102 400h1v1h-1zM250 426h1v1h-1zM122 407h1v1h-1zM253 404h1v1h-1zM257 401h1v1h-1zM215 403h1v1h-1zM168 403h1v1h-1zM215 417h1v1h-1zM221 420h1v1h-1zM260 411h1v1h-1zM73 421h1v1h-1zM104 406h1v1h-1zM495 308h1v1h-1zM350 289h1v1h-1zM467 278h1v1h-1zM478 308h1v1h-1zM421 280h1v1h-1zM330 292h1v1h-1zM354 300h1v1h-1zM423 310h1v1h-1zM442 288h1v1h-1zM385 292h1v1h-1zM307 304h1v1h-1zM513 302h1v1h-1zM318 306h1v1h-1zM401 290h1v1h-1zM445 278h1v1h-1zM381 310h1v1h-1zM488 299h1v1h-1zM403 298h1v1h-1zM451 291h1v1h-1zM310 285h1v1h-1zM339 293h1v1h-1zM515 302h1v1h-1zM307 297h1v1h-1zM422 298h1v1h-1zM352 279h1v1h-1zM374 310h1v1h-1zM306 280h1v1h-1zM397 299h1v1h-1zM425 304h1v1h-1zM481 295h1v1h-1zM409 279h1v1h-1zM340 282h1v1h-1zM394 280h1v1h-1zM329 299h1v1h-1zM460 286h1v1h-1zM405 329h1v1h-1zM417 376h1v1h-1zM500 396h1v1h-1zM461 366h1v1h-1zM510 373h1v1h-1zM433 398h1v1h-1zM307 338h1v1h-1zM397 377h1v1h-1zM428 347h1v1h-1zM497 381h1v1h-1zM448 331h1v1h-1zM418 375h1v1h-1zM500 381h1v1h-1zM350 349h1v1h-1zM456 358h1v1h-1zM501 388h1v1h-1zM338 348h1v1h-1zM502 328h1v1h-1zM424 377h1v1h-1zM354 383h1v1h-1zM412 335h1v1h-1zM390 378h1v1h-1zM314 374h1v1h-1zM286 387h1v1h-1zM381 313h1v1h-1zM422 315h1v1h-1zM417 361h1v1h-1zM424 382h1v1h-1zM316 372h1v1h-1zM308 398h1v1h-1zM327 318h1v1h-1zM422 368h1v1h-1zM390 361h1v1h-1zM353 341h1v1h-1zM406 373h1v1h-1zM317 353h1v1h-1zM396 370h1v1h-1zM419 350h1v1h-1zM312 334h1v1h-1zM392 389h1v1h-1zM292 343h1v1h-1zM318 399h1v1h-1zM484 312h1v1h-1zM294 334h1v1h-1zM324 339h1v1h-1zM288 397h1v1h-1zM357 351h1v1h-1zM470 355h1v1h-1zM347 389h1v1h-1zM412 323h1v1h-1zM412 384h1v1h-1zM316 375h1v1h-1zM444 342h1v1h-1zM468 335h1v1h-1zM464 377h1v1h-1zM509 365h1v1h-1zM290 358h1v1h-1zM447 362h1v1h-1zM496 377h1v1h-1zM442 330h1v1h-1zM422 336h1v1h-1zM506 390h1v1h-1zM421 391h1v1h-1zM340 377h1v1h-1zM340 379h1v1h-1zM441 385h1v1h-1zM504 327h1v1h-1zM344 390h1v1h-1zM492 354h1v1h-1zM516 333h1v1h-1zM365 387h1v1h-1zM365 334h1v1h-1zM340 334h1v1h-1zM512 322h1v1h-1zM319 340h1v1h-1zM318 321h1v1h-1zM351 359h1v1h-1zM309 365h1v1h-1zM498 363h1v1h-1zM424 400h1v1h-1zM317 335h1v1h-1zM388 390h1v1h-1zM460 312h1v1h-1zM309 335h1v1h-1zM430 397h1v1h-1zM376 356h1v1h-1zM314 400h1v1h-1zM414 391h1v1h-1zM479 353h1v1h-1zM413 397h1v1h-1zM498 334h1v1h-1zM490 319h1v1h-1zM408 323h1v1h-1zM291 314h1v1h-1zM480 380h1v1h-1zM442 416h1v1h-1zM516 418h1v1h-1zM408 404h1v1h-1zM333 405h1v1h-1zM314 406h1v1h-1zM329 426h1v1h-1zM325 409h1v1h-1zM457 403h1v1h-1zM433 401h1v1h-1zM319 430h1v1h-1zM459 414h1v1h-1zM304 424h1v1h-1zM309 410h1v1h-1zM385 414h1v1h-1zM394 416h1v1h-1zM375 413h1v1h-1zM338 419h1v1h-1zM380 400h1v1h-1zM447 422h1v1h-1zM295 427h1v1h-1zM336 405h1v1h-1zM389 414h1v1h-1zM377 423h1v1h-1zM379 412h1v1h-1zM520 406h1v1h-1z" fill="#f2ee1a" shape-rendering="crispEdges"/>
<path d="M52.3 415.9 L53.1 402.9 L54.7 369.0 L55.7 335.1 L57.0 303.9 L58.3 291.4 L59.6 301.3 L60.4 329.9 L61.7 356.0 L63.0 392.5 L64.3 415.9 L65.6 435.2 L67.5 445.6 L69.0 461.3 L69.8 432.6 L70.8 395.1 L72.1 342.9 L73.4 311.7 L75.3 298.7 L76.6 289.5 L78.1 306.5 L79.2 319.5 L81.3 332.5 L83.3 345.6 L86.5 353.4 L88.6 361.2 L90.4 370.3 L93.0 372.1 L94.3 356.0 L95.6 329.9 L96.9 303.9 L97.7 291.4 L98.5 316.9 L99.5 361.2 L100.8 401.6 L104.7 397.7 L105.5 382.0 L106.0 356.0 L106.8 322.1 L107.6 309.1 L108.9 329.9 L110.4 356.0 L112.0 382.0 L113.8 410.7 L114.6 418.5 L116.4 392.5 L118.3 369.0 L119.8 345.6 L121.6 328.6 L122.9 342.9 L124.8 356.0 L126.3 348.2 L128.2 339.0 L129.5 350.8 L131.3 363.8 L133.4 379.4 L135.5 400.3 L137.3 418.5 L138.6 427.6 L139.9 405.5 L141.2 374.2 L142.0 345.6 L143.3 332.5 L145.9 332.5 L146.9 322.1 L148.2 298.7 L149.3 281.7 L150.0 303.9 L151.1 345.6 L152.4 358.6 L154.2 348.2 L156.0 342.9 L157.3 363.8 L158.9 384.6 L159.4 392.5 L160.7 374.2 L162.0 337.7 L163.3 311.7 L164.6 337.7 L165.9 374.2 L167.8 376.8 L169.8 375.5 L171.1 395.1 L172.5 415.9 L173.2 437.8 L174.5 453.4 L176.4 469.1 L177.7 479.5 L184.2 467.8 L185.5 453.4 L186.3 426.3 L186.8 415.9 L188.1 382.0 L189.4 345.6 L190.7 316.9 L191.5 303.9 L192.3 329.9 L192.8 369.0 L193.3 405.5 L194.6 458.7 L195.9 426.3 L198.0 412.0 L199.8 426.3 L201.4 448.2 L202.4 415.9 L203.7 400.3 L205.5 388.5 L206.8 405.5 L208.1 423.7 L209.4 433.9 L211.5 427.6 L212.8 456.1 L214.1 479.5 L215.4 510.8 L216.7 497.7 L218.0 463.9 L219.9 440.4 L222.0 415.9 L223.3 374.2 L224.0 345.6 L225.1 322.1 L225.9 309.1 L227.2 329.9 L228.5 356.0 L229.8 372.9 L231.6 366.4 L232.4 369.0 L233.7 392.5 L235.5 415.9 L237.1 445.6 L238.1 482.1 L239.4 500.3 L240.2 476.9 L241.0 400.3 L242.0 361.2 L242.8 329.9 L243.6 303.9 L244.6 329.9 L245.4 374.2 L245.9 405.5 L246.7 441.7 L248.0 410.7 L249.3 395.1 L251.1 374.2 L252.7 350.8 L254.5 335.1 L257.6 324.7 L259.7 335.1 L261.0 350.8 L262.3 379.4 L263.6 408.1 L264.4 450.8 L266.2 415.9 L268.3 392.5 L270.1 379.4 L271.5 370.3 L272.2 395.1 L272.8 476.9 L273.5 544.6 L274.6 582.4 L275.6 560.3 L276.7 521.2 L278.0 476.9 L279.3 456.1 L281.4 446.9 L282.7 456.1 L284.0 469.1 L285.3 462.6 L285.8 415.9 L287.1 384.6 L288.1 358.6 L289.4 369.0 L290.7 384.6 L292.3 388.5 L293.6 379.4 L294.9 371.6 L295.9 387.2 L297.2 418.5 L298.0 448.2 L298.5 463.9 L299.3 445.6 L300.1 400.3 L301.2 374.2 L302.7 346.9 L303.8 379.4 L304.5 421.1 L304.8 469.1 L305.3 510.8 L305.8 543.3 L306.6 508.2 L307.1 469.1 L307.9 421.1 L309.0 374.2 L309.8 348.2 L311.1 374.2 L311.6 421.1 L311.8 469.1 L312.6 490.4 L313.1 466.5 L314.2 395.1 L315.5 366.4 L316.5 347.4 L317.6 369.0 L318.3 400.3 L318.9 456.1 L319.7 478.2 L320.4 450.8 L321.5 400.3 L322.8 374.2 L323.6 359.9 L324.9 374.2 L326.2 384.6 L327.2 415.9 L328.0 437.8 L329.3 469.1 L330.6 497.7 L331.9 523.8 L332.7 549.8 L333.7 561.6 L335.3 552.5 L337.1 549.8 L338.4 557.7 L340.5 572.0 L341.3 547.2 L342.3 529.0 L343.4 505.6 L344.4 476.9 L345.4 456.1 L346.5 437.8 L347.5 421.1 L349.6 409.4 L351.4 404.2 L352.7 415.9 L353.8 431.5 L354.8 448.2 L356.1 469.1 L357.2 492.5 L358.5 522.5 L359.5 492.5 L361.1 461.3 L362.4 448.2 L363.7 410.7 L365.2 392.5 L367.1 382.0 L368.4 376.8 L368.9 405.5 L369.7 456.1 L370.5 482.1 L371.2 516.0 L371.8 540.7 L372.8 502.9 L373.6 476.9 L374.4 445.6 L375.4 404.2 L376.7 415.9 L378.0 443.0 L379.3 428.9 L380.1 400.3 L381.4 374.2 L383.0 356.0 L384.0 342.9 L385.6 323.9 L386.3 358.6 L386.9 395.1 L387.6 415.9 L387.9 456.1 L388.7 495.1 L389.5 534.2 L389.7 560.3 L390.5 529.0 L391.3 495.1 L392.1 456.1 L392.3 428.9 L393.9 437.8 L395.7 445.6 L397.0 449.5 L397.8 440.4 L399.6 426.3 L403.5 431.5 L404.3 443.0 L405.4 461.3 L406.7 482.1 L407.5 469.1 L408.8 450.8 L410.1 437.8 L412.7 432.6 L413.4 430.2 L414.5 415.9 L415.3 392.5 L416.6 358.6 L417.6 342.2 L418.1 374.2 L418.7 405.5 L418.9 461.3 L419.4 495.1 L420.0 534.2 L420.5 580.6 L421.3 542.0 L422.3 510.8 L423.1 482.1 L424.4 466.5 L427.0 461.3 L427.8 482.1 L428.8 497.7 L429.9 521.2 L430.9 542.0 L432.2 560.3 L434.0 578.5 L434.8 555.1 L435.6 508.2 L436.6 469.1 L437.4 444.3 L438.2 463.9 L439.2 508.2 L440.3 555.1 L441.3 584.2 L442.1 555.1 L443.1 529.0 L444.4 509.5 L445.5 521.2 L446.5 542.0 L447.6 560.3 L448.4 570.7 L448.9 534.2 L449.4 482.1 L450.2 431.5 L450.7 415.9 L451.7 393.8 L453.8 400.3 L455.6 405.5 L456.4 426.3 L457.0 461.3 L457.7 495.1 L458.5 516.0 L459.6 497.7 L461.1 482.1 L462.4 471.7 L464.0 484.7 L465.3 495.1 L466.9 482.1 L468.2 474.3 L469.2 471.7 L469.5 489.9 L470.0 516.0 L470.8 542.0 L471.5 565.5 L472.6 587.6 L476.5 578.5 L477.3 560.3 L478.3 542.0 L479.4 516.0 L480.4 495.1 L481.7 476.9 L483.0 456.1 L483.8 415.9 L484.3 374.2 L485.6 316.9 L486.7 286.9 L487.7 322.1 L488.5 361.2 L489.5 392.5 L490.3 415.9 L490.6 445.6 L490.8 469.1 L491.6 445.6 L493.4 415.9 L494.7 395.1 L496.0 369.0 L497.3 353.9 L498.1 374.2 L498.9 405.5 L499.7 437.8 L500.5 458.7 L501.2 443.0 L502.5 431.5 L504.6 415.9 L507.2 408.1 L508.5 421.1 L509.8 443.0 L511.7 462.6 L512.4 448.2 L513.0 415.9 L514.5 395.1 L516.4 405.5 L518.2 415.9 L519.7 423.7 L520.3 423.7 L521.3 428.9 L522.6 445.6 L523.9 463.9 L524.4 443.0 L524.7 400.3 L525.7 361.2 L527.0 316.9 L528.6 292.1 L529.4 322.1 L530.4 361.2 L531.2 400.3 L532.0 426.3 L530.7 456.1 L531.2 476.9 L531.7 493.8 L532.5 461.3 L533.5 415.9 L534.9 379.4 L535.6 363.8 L536.7 384.6 L537.7 400.3 L538.8 392.5 L539.8 361.2 L540.8 322.1 L541.6 309.1 L542.7 298.7 L543.4 335.1 L544.2 374.2 L545.0 413.3 L544.5 450.8 L545.0 497.7 L545.5 540.7 L546.3 508.2 L547.1 450.8 L547.6 387.2 L548.4 335.1 L549.4 300.7 L550.5 329.9 L551.3 374.2 L551.8 421.1 L552.0 437.8 L552.6 457.4 L553.3 443.0 L555.2 426.3 L556.5 417.2 L559.1 415.9 L560.4 408.1 L561.7 382.0 L562.5 366.4 L563.5 357.3 L564.3 374.2 L565.1 400.3 L565.9 453.4 L566.6 474.3 L567.7 453.4 L569.5 431.5 L570.8 413.3 L572.1 382.0 L573.4 364.3 L574.2 379.4 L575.2 405.5 L576.8 456.1 L577.8 479.5 L578.4 450.8 L578.9 400.3 L579.7 379.4 L580.4 361.2 L581.2 382.0 L582.0 418.5 L582.5 445.6 L583.6 487.3 L584.6 513.4 L585.1 482.1 L585.7 445.6 L586.2 400.3 L587.5 374.2 L588.3 389.8 L589.0 415.9 L589.8 440.4 L590.9 456.1 L591.6 440.4 L592.9 415.9 L594.3 393.0 L595.6 405.5 L596.6 415.9 L598.2 435.2 L600.2 448.2 L601.5 455.5 L602.3 440.4 L602.6 415.9 L603.4 382.0 L604.4 365.9 L605.5 382.0 L606.5 405.5 L607.5 421.1 L607.8 443.0 L608.8 466.5 L609.9 445.6 L611.7 426.3 L612.5 415.9 L613.8 384.6 L615.6 366.9 L616.9 374.2 L618.0 384.6 L619.0 400.3 L620.3 426.3 L620.6 443.0 L621.6 474.3 L622.9 492.5 L625.3 502.9 L626.3 482.1 L627.3 456.1 L628.9 437.8 L629.9 456.1 L630.7 492.5 L631.5 526.4 L632.5 548.5 L634.1 534.2 L635.9 510.8 L637.8 489.9 L639.3 479.5 L641.1 471.7 L643.2 464.7 L644.5 482.1 L645.8 508.2 L647.7 534.2 L649.5 568.1 L651.6 583.7 L653.4 587.6 L654.2 560.3 L655.5 529.0 L656.8 497.7 L658.1 486.0 L660.7 487.3 L661.5 469.1 L662.5 443.0 L663.0 415.9 L664.3 397.1 L665.4 415.9 L665.9 443.0 L666.7 476.9 L667.5 456.1 L668.5 426.3 L669.0 405.5 L669.8 387.2 L670.6 371.1 L671.6 392.5 L672.2 421.1 L672.4 437.8 L673.2 469.1 L674.2 508.2 L675.0 538.1 L675.8 508.2 L676.6 482.1 L677.6 462.6 L678.4 495.1 L679.4 542.0 L680.7 573.3 L681.8 588.9 L683.1 575.9 L684.7 560.3 L686.0 534.2 L687.3 513.4 L688.6 493.8 L691.2 490.4 L692.0 508.2 L692.7 534.2 L694.0 555.1 L695.3 575.9 L695.9 583.7 L696.4 547.2 L696.9 508.2 L697.7 469.1 L698.5 443.0 L699.2 456.1 L700.3 489.9 L701.3 521.2 L702.4 542.0 L703.7 557.7 L705.5 569.4 L707.6 565.5 L709.4 561.6 L710.7 573.3 L712.8 588.9 L714.9 578.5 L717.2 568.1 L719.6 559.0 L721.1 573.3 L723.2 590.2 L729.7 590.2 L731.6 585.0 L733.6 579.8 L736.2 585.0 L740.1 591.0 L744.1 592.1" stroke="#12b9f7" stroke-width="1" fill="none" shape-rendering="crispEdges"/>
</svg>
<div class="t" style="left:52.1px;transform:scaleX(0.968);top:155px;font-size:11px;line-height:12px;">MB/s</div>
<div class="t" style="left:54.7px;transform:scaleX(1.001);top:169px;font-size:11px;line-height:12px;color:#c4c4c4;">trial version</div>
<div class="t" style="left:729.9px;transform:scaleX(0.957);top:155px;font-size:11px;line-height:12px;">ms</div>
<div class="t" style="left:29.5px;transform:scaleX(0.956);top:162px;font-size:11px;line-height:12px;">150</div>
<div class="t" style="left:29.5px;transform:scaleX(0.956);top:233px;font-size:11px;line-height:12px;">125</div>
<div class="t" style="left:29.5px;transform:scaleX(0.956);top:304px;font-size:11px;line-height:12px;">100</div>
<div class="t" style="left:35.5px;transform:scaleX(0.941);top:375px;font-size:11px;line-height:12px;">75</div>
<div class="t" style="left:35.5px;transform:scaleX(0.941);top:446px;font-size:11px;line-height:12px;">50</div>
<div class="t" style="left:35.5px;transform:scaleX(0.941);top:517px;font-size:11px;line-height:12px;">25</div>
<div class="t" style="left:748.8px;transform:scaleX(0.977);top:162px;font-size:11px;line-height:12px;">60</div>
<div class="t" style="left:748.8px;transform:scaleX(0.977);top:233px;font-size:11px;line-height:12px;">50</div>
<div class="t" style="left:748.8px;transform:scaleX(0.977);top:304px;font-size:11px;line-height:12px;">40</div>
<div class="t" style="left:748.8px;transform:scaleX(0.977);top:375px;font-size:11px;line-height:12px;">30</div>
<div class="t" style="left:748.8px;transform:scaleX(0.977);top:446px;font-size:11px;line-height:12px;">20</div>
<div class="t" style="left:748.8px;transform:scaleX(0.977);top:517px;font-size:11px;line-height:12px;">10</div>
<div class="t" style="left:49.6px;transform:scaleX(0.857);top:599px;font-size:11px;line-height:12px;">0</div>
<div class="t" style="left:115.4px;transform:scaleX(0.977);top:599px;font-size:11px;line-height:12px;">50</div>
<div class="t" style="left:181.8px;transform:scaleX(0.956);top:599px;font-size:11px;line-height:12px;">100</div>
<div class="t" style="left:251.0px;transform:scaleX(0.956);top:599px;font-size:11px;line-height:12px;">150</div>
<div class="t" style="left:320.2px;transform:scaleX(0.956);top:599px;font-size:11px;line-height:12px;">200</div>
<div class="t" style="left:389.4px;transform:scaleX(0.956);top:599px;font-size:11px;line-height:12px;">250</div>
<div class="t" style="left:458.6px;transform:scaleX(0.956);top:599px;font-size:11px;line-height:12px;">300</div>
<div class="t" style="left:527.8px;transform:scaleX(0.956);top:599px;font-size:11px;line-height:12px;">350</div>
<div class="t" style="left:597.0px;transform:scaleX(0.956);top:599px;font-size:11px;line-height:12px;">400</div>
<div class="t" style="left:666.2px;transform:scaleX(0.956);top:599px;font-size:11px;line-height:12px;">450</div>
<div class="t" style="left:727.5px;transform:scaleX(1.012);top:599px;font-size:11px;line-height:12px;">500gB</div>
<div class="abs btn" style="left:787px;top:149px;width:71px;height:19px"></div>
<div class="t" style="left:811.7px;transform:scaleX(0.940);top:154px;font-size:11px;line-height:12px;">Start</div>
<div class="abs" style="left:778px;top:180px;width:101px;height:1px;background:#a0a0a0"></div>
<div class="abs" style="left:778px;top:219px;width:101px;height:1px;background:#a0a0a0"></div>
<div class="abs" style="left:778px;top:291px;width:101px;height:1px;background:#a0a0a0"></div>
<div class="abs" style="left:778px;top:395px;width:101px;height:1px;background:#a0a0a0"></div>
<svg class="abs" style="left:783px;top:186px" width="13" height="13"><defs><linearGradient id="rg192" x1="0" y1="0" x2="1" y2="1"><stop offset="0" stop-color="#cfcfcf"/><stop offset="1" stop-color="#fdfdfd"/></linearGradient></defs><circle cx="6.500" cy="6.500" r="5.500" fill="url(#rg192)" stroke="#8e8f8f"/><circle cx="6.500" cy="6.500" r="2.700" fill="#1c4f80"/><circle cx="5.900" cy="5.900" r="1.300" fill="#58b4ee"/></svg>
<svg class="abs" style="left:783px;top:202px" width="13" height="13"><defs><linearGradient id="rg208" x1="0" y1="0" x2="1" y2="1"><stop offset="0" stop-color="#cfcfcf"/><stop offset="1" stop-color="#fdfdfd"/></linearGradient></defs><circle cx="6.500" cy="6.500" r="5.500" fill="url(#rg208)" stroke="#8e8f8f"/></svg>
<div class="t" style="left:798.8px;transform:scaleX(0.984);top:186px;font-size:11px;line-height:12px;">Read</div>
<div class="t" style="left:798.8px;transform:scaleX(0.976);top:202px;font-size:11px;line-height:12px;">Write</div>
<svg class="abs" style="left:783px;top:227px" width="13" height="13"><rect x="0.500" y="0.500" width="12" height="12" fill="#f4f4f4" stroke="#8e8f8f"/><rect x="2.500" y="2.500" width="8" height="8" fill="#dfe2e8" stroke="#c0c4cc"/></svg>
<div class="t" style="left:798.8px;transform:scaleX(0.958);top:228px;font-size:11px;line-height:12px;">Short stroke</div>
<div class="abs spin"></div>
<div class="t" style="left:785.8px;transform:scaleX(1.030);top:251px;font-size:11px;line-height:12px;color:#9a9a9a;">40</div>
<svg class="abs" style="left:828px;top:249px" width="15" height="16"><rect x="0.500" y="0.500" width="14" height="7" fill="#f0f0f0" stroke="#d0d0d0"/><rect x="0.500" y="8.500" width="14" height="7" fill="#ececec" stroke="#d0d0d0"/><polygon points="4.500,5.500 7.500,2.500 10.500,5.500" fill="#a8a8a8"/><polygon points="4.500,10.500 7.500,13.500 10.500,10.500" fill="#a8a8a8"/></svg>
<div class="t" style="left:855.4px;transform:scaleX(1.034);top:250px;font-size:11px;line-height:12px;">gB</div>
<svg class="abs" style="left:783px;top:276px" width="13" height="13"><rect x="0.500" y="0.500" width="12" height="12" fill="#f4f4f4" stroke="#8e8f8f"/><rect x="2.500" y="2.500" width="8" height="8" fill="#dfe2e8" stroke="#c0c4cc"/><path d="M3 6.200l2.300 3.300 4.200-7" fill="none" stroke="#3a4a9a" stroke-width="1.800"/></svg>
<div class="t" style="left:799.4px;transform:scaleX(0.945);top:276px;font-size:11px;line-height:12px;">Transfer rate</div>
<div class="t" style="left:783.2px;transform:scaleX(0.908);top:294px;font-size:11px;line-height:12px;">Minimum</div>
<div class="abs vbox" style="top:310px"></div>
<div class="t" style="left:802.6px;transform:scaleX(1.090);top:310px;font-size:12px;line-height:14px;font-weight:bold;-webkit-text-stroke:0;color:#14b4fa;">0.9 MB/s</div>
<div class="t" style="left:783.2px;transform:scaleX(0.908);top:327px;font-size:11px;line-height:12px;">Maximum</div>
<div class="abs vbox" style="top:342px"></div>
<div class="t" style="left:797.0px;transform:scaleX(1.051);top:342px;font-size:12px;line-height:14px;font-weight:bold;-webkit-text-stroke:0;color:#14b4fa;">109.8 MB/s</div>
<div class="t" style="left:783.1px;transform:scaleX(0.970);top:357px;font-size:11px;line-height:12px;">Average</div>
<div class="abs vbox" style="top:373px"></div>
<div class="t" style="left:799.4px;transform:scaleX(1.089);top:373px;font-size:12px;line-height:14px;font-weight:bold;-webkit-text-stroke:0;color:#14b4fa;">54.6 MB/s</div>
<svg class="abs" style="left:783px;top:401px" width="13" height="13"><rect x="0.500" y="0.500" width="12" height="12" fill="#f4f4f4" stroke="#8e8f8f"/><rect x="2.500" y="2.500" width="8" height="8" fill="#dfe2e8" stroke="#c0c4cc"/><path d="M3 6.200l2.300 3.300 4.200-7" fill="none" stroke="#3a4a9a" stroke-width="1.800"/></svg>
<div class="t" style="left:799.1px;transform:scaleX(0.954);top:402px;font-size:11px;line-height:12px;">Access time</div>
<div class="abs vbox" style="top:417px"></div>
<div class="t" style="left:806.3px;transform:scaleX(1.029);top:417px;font-size:12px;line-height:14px;font-weight:bold;-webkit-text-stroke:0;color:#f6f614;">45.5 ms</div>
<svg class="abs" style="left:783px;top:435px" width="13" height="13"><rect x="0.500" y="0.500" width="12" height="12" fill="#f4f4f4" stroke="#8e8f8f"/><rect x="2.500" y="2.500" width="8" height="8" fill="#dfe2e8" stroke="#c0c4cc"/><path d="M3 6.200l2.300 3.300 4.200-7" fill="none" stroke="#3a4a9a" stroke-width="1.800"/></svg>
<div class="t" style="left:799.4px;transform:scaleX(0.925);top:436px;font-size:11px;line-height:12px;">Burst rate</div>
<div class="abs vbox" style="top:451px"></div>
<div class="t" style="left:799.4px;transform:scaleX(1.089);top:451px;font-size:12px;line-height:14px;font-weight:bold;-webkit-text-stroke:0;color:#fff;">27.6 MB/s</div>
<div class="t" style="left:782.5px;transform:scaleX(0.962);top:469px;font-size:11px;line-height:12px;">CPU usage</div>
<div class="abs vbox" style="top:484px"></div>
<div class="t" style="left:813.1px;transform:scaleX(1.008);top:484px;font-size:12px;line-height:14px;font-weight:bold;-webkit-text-stroke:0;color:#fff;">14.9%</div>
</body></html>
